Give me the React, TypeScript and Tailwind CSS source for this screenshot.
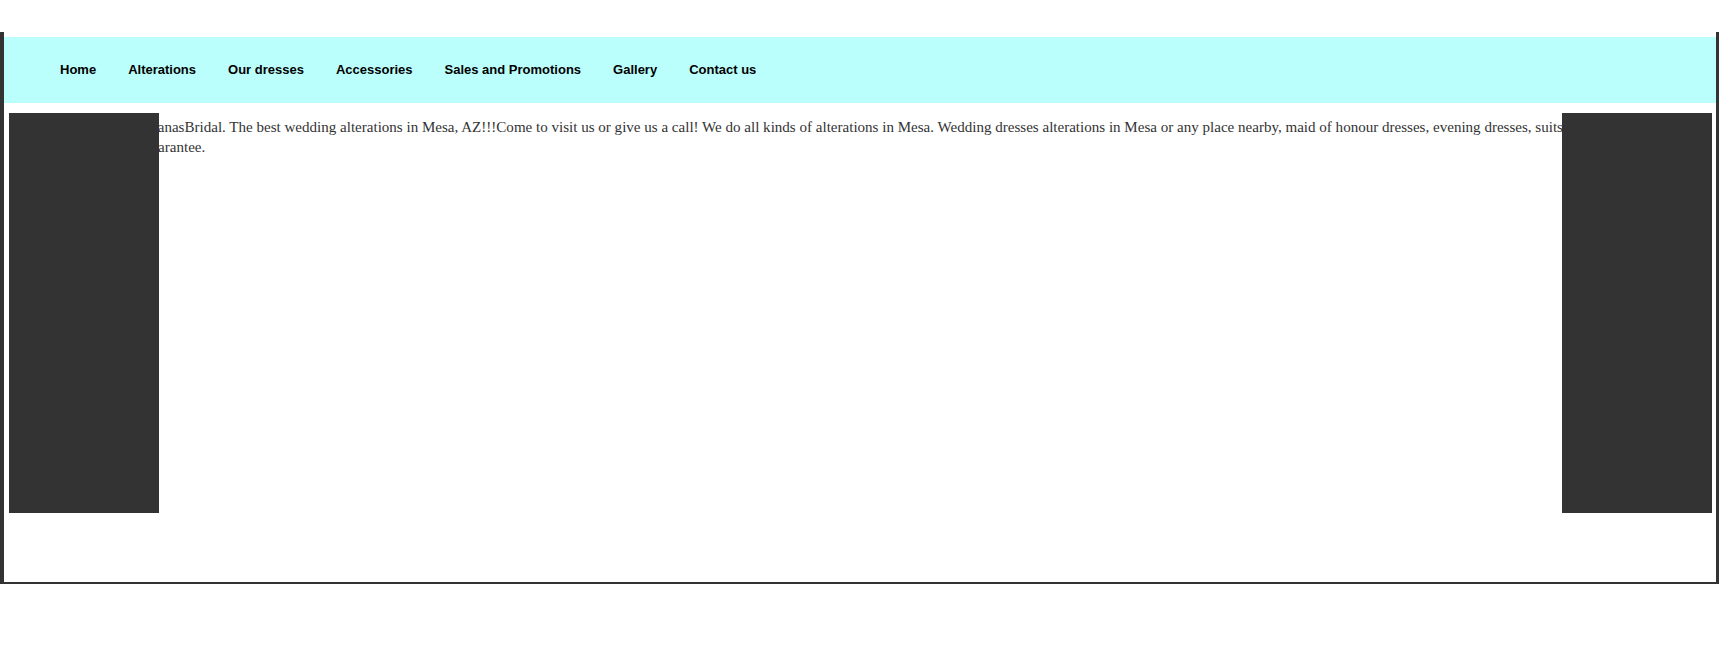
import { FC } from "react"

const NAV_ITEMS = [
  "Home",
  "Alterations",
  "Our dresses",
  "Accessories",
  "Sales and Promotions",
  "Gallery",
  "Contact us",
]

const Nav: FC = () => (
  <nav className="h-[66px] bg-[#bbfffd] flex items-center">
    <ul className="flex pl-10 font-['Liberation_Sans',Arial,sans-serif] text-[13px] font-bold text-black">
      {NAV_ITEMS.map((item) => (
        <li key={item} className="px-4">
          <a href="#">{item}</a>
        </li>
      ))}
    </ul>
  </nav>
)

export default function App() {
  return (
    <div className="min-h-[648px] bg-white pt-8">
      <div className="h-[552px] pt-[5px] border-l-4 border-r-[3px] border-b-2 border-[#333]">
        <Nav />
        <div className="relative h-[479px]">
          <p className="pt-[14px] pl-[63px] pr-2 font-['Liberation_Serif','Times_New_Roman',serif] text-[15.05px] leading-[20px] text-[#333] whitespace-nowrap">
            Welcome to DianasBridal. The best wedding alterations in Mesa, AZ!!!Come to visit us or give us a call! We do all kinds of alterations in Mesa. Wedding dresses alterations in Mesa or any place nearby, maid of honour dresses, evening dresses, suits, pants, etc. All
            <br />
            with quality guarantee.
          </p>
          <aside className="absolute left-[5px] top-[10px] w-[150px] h-[400px] bg-[#333]" />
          <aside className="absolute right-[4px] top-[10px] w-[150px] h-[400px] bg-[#333]" />
        </div>
      </div>
    </div>
  )
}
